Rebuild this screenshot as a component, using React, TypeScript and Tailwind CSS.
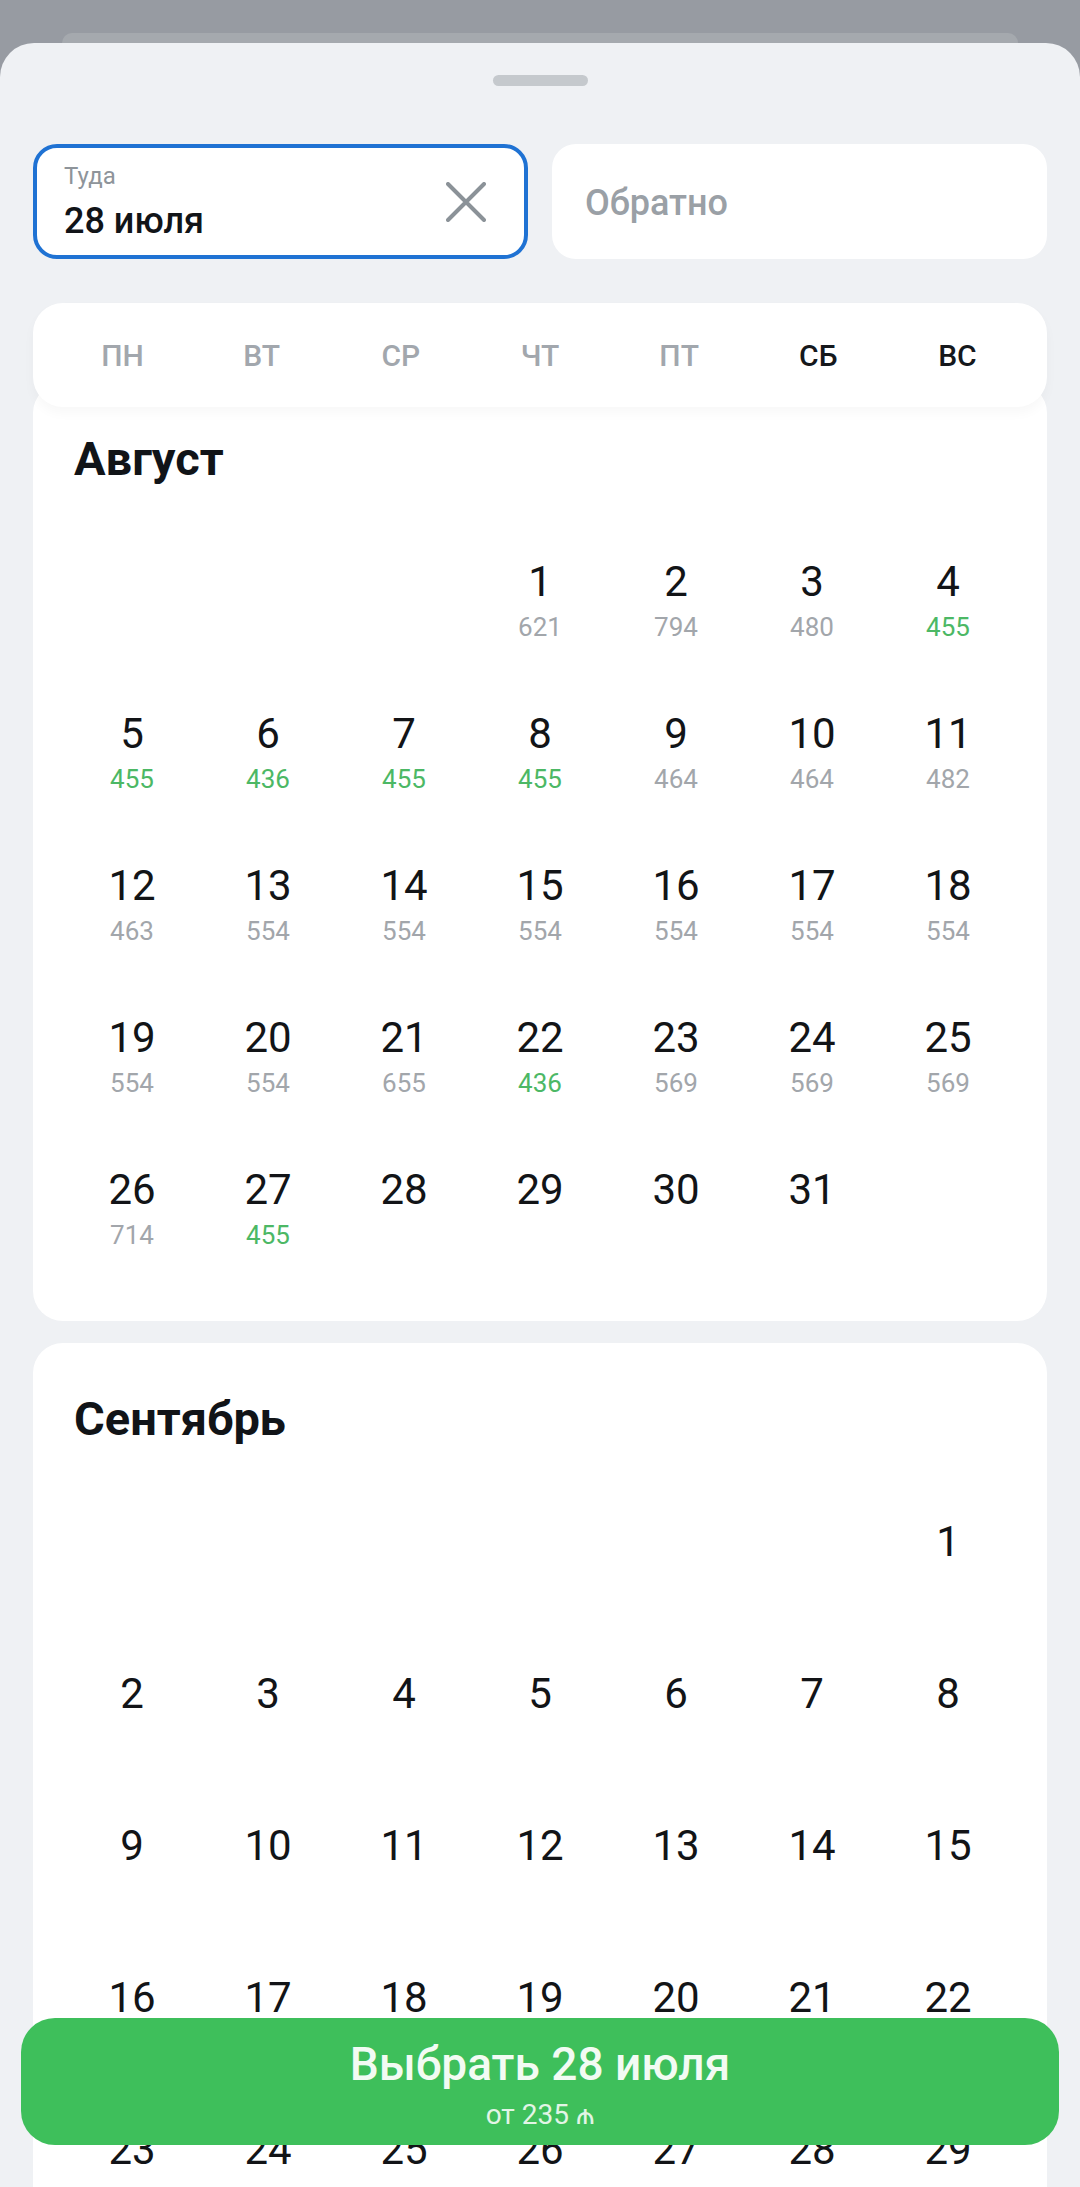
import { useState } from 'react';

interface Day {
  day: number;
  price?: number;
  cheap?: boolean;
}

const weekdays = [
  { label: 'ПН', weekend: false },
  { label: 'ВТ', weekend: false },
  { label: 'СР', weekend: false },
  { label: 'ЧТ', weekend: false },
  { label: 'ПТ', weekend: false },
  { label: 'СБ', weekend: true },
  { label: 'ВС', weekend: true },
];

const augustPrices: Record<number, [number, boolean]> = {
  1: [621, false],
  2: [794, false],
  3: [480, false],
  4: [455, true],
  5: [455, true],
  6: [436, true],
  7: [455, true],
  8: [455, true],
  9: [464, false],
  10: [464, false],
  11: [482, false],
  12: [463, false],
  13: [554, false],
  14: [554, false],
  15: [554, false],
  16: [554, false],
  17: [554, false],
  18: [554, false],
  19: [554, false],
  20: [554, false],
  21: [655, false],
  22: [436, true],
  23: [569, false],
  24: [569, false],
  25: [569, false],
  26: [714, false],
  27: [455, true],
};

function buildMonth(offset: number, length: number, prices: Record<number, [number, boolean]> = {}) {
  const cells: (Day | null)[] = [];
  for (let i = 0; i < offset; i++) cells.push(null);
  for (let d = 1; d <= length; d++) {
    const p = prices[d];
    cells.push(p ? { day: d, price: p[0], cheap: p[1] } : { day: d });
  }
  return cells;
}

function MonthCard({ title, cells, className = '' }: { title: string; cells: (Day | null)[]; className?: string }) {
  return (
    <div className={`rounded-[30px] bg-white px-[31px] pt-[52px] pb-[41px] ${className}`}>
      <h2 className="ml-[10px] mb-[37px] text-[47px] leading-[48px] font-bold text-[#111418]">{title}</h2>
      <div className="grid grid-cols-7">
        {cells.map((cell, i) => (
          <div key={i} className="flex h-[152px] flex-col items-center pt-[38px]">
            {cell && (
              <>
                <span className="text-[42px] leading-[48px] text-[#121417]">{cell.day}</span>
                {cell.price && (
                  <span
                    className={`mt-[6px] text-[26px] leading-[30px] ${
                      cell.cheap ? 'text-[#4cb865]' : 'text-[#a2a6ab]'
                    }`}
                  >
                    {cell.price}
                  </span>
                )}
              </>
            )}
          </div>
        ))}
      </div>
    </div>
  );
}

export default function App() {
  const [from, setFrom] = useState<string | null>('28 июля');

  const august = buildMonth(3, 31, augustPrices);
  const september = buildMonth(6, 30);

  return (
    <div className="relative h-[2187px] overflow-hidden bg-[#979ba2] font-['Roboto',sans-serif]">
      {/* sheet behind */}
      <div className="mx-[62px] mt-[33px] h-[10px] rounded-t-[20px] bg-[#a5a9ae]" />

      {/* Sheet */}
      <div className="min-h-[2200px] rounded-t-[34px] bg-[#eff1f4] px-[33px] pt-[32px]">
        <div className="mx-auto h-[11px] w-[95px] rounded-full bg-[#c5c9cd]" />

        {/* Inputs */}
        <div className="mt-[58px] grid h-[115px] grid-cols-2 gap-[24px]">
          <div className="flex items-center justify-between rounded-[24px] border-[4px] border-[#1f72d3] bg-white pl-[27px] pr-[38px]">
            <div className="flex flex-col">
              <span className="text-[24px] leading-[26px] text-[#8e949a]">Туда</span>
              <span className="mt-[12px] text-[36px] leading-[40px] font-medium text-[#111418]">{from}</span>
            </div>
            <button onClick={() => setFrom(from)} className="flex h-[40px] w-[40px] items-center justify-center">
              <svg width="40" height="40" viewBox="0 0 40 40" fill="none">
                <path d="M2 2L38 38M38 2L2 38" stroke="#8b9298" strokeWidth="4" strokeLinecap="round" />
              </svg>
            </button>
          </div>
          <div className="flex items-center rounded-[24px] bg-white pl-[33px] pt-[2px]">
            <span className="text-[36px] leading-[40px] font-medium text-[#9aa0a6]">Обратно</span>
          </div>
        </div>

        {/* Weekdays */}
        <div className="relative z-10 mt-[44px] grid h-[104px] grid-cols-7 items-center rounded-[30px] bg-white px-[20px] shadow-[0_6px_12px_rgba(0,0,0,0.03)]">
          {weekdays.map((w) => (
            <span
              key={w.label}
              className={`text-center text-[30px] font-medium ${w.weekend ? 'text-[#15181c]' : 'text-[#a2a7ad]'}`}
            >
              {w.label}
            </span>
          ))}
        </div>

        <MonthCard title="Август" cells={august} className="-mt-[24px]" />
        <MonthCard title="Сентябрь" cells={september} className="mt-[22px]" />
      </div>

      {/* Bottom button */}
      <button className="absolute bottom-[42px] left-[21px] right-[21px] flex h-[127px] flex-col items-center rounded-[34px] bg-[#3ebf5b] pt-[20px]">
        <span className="text-[46px] leading-[52px] font-medium text-[#f2fbf3]">Выбрать 28 июля</span>
        <span className="mt-[10px] text-[28px] leading-[30px] text-[#e2f5e6]">от 235 ₼</span>
      </button>
    </div>
  );
}
